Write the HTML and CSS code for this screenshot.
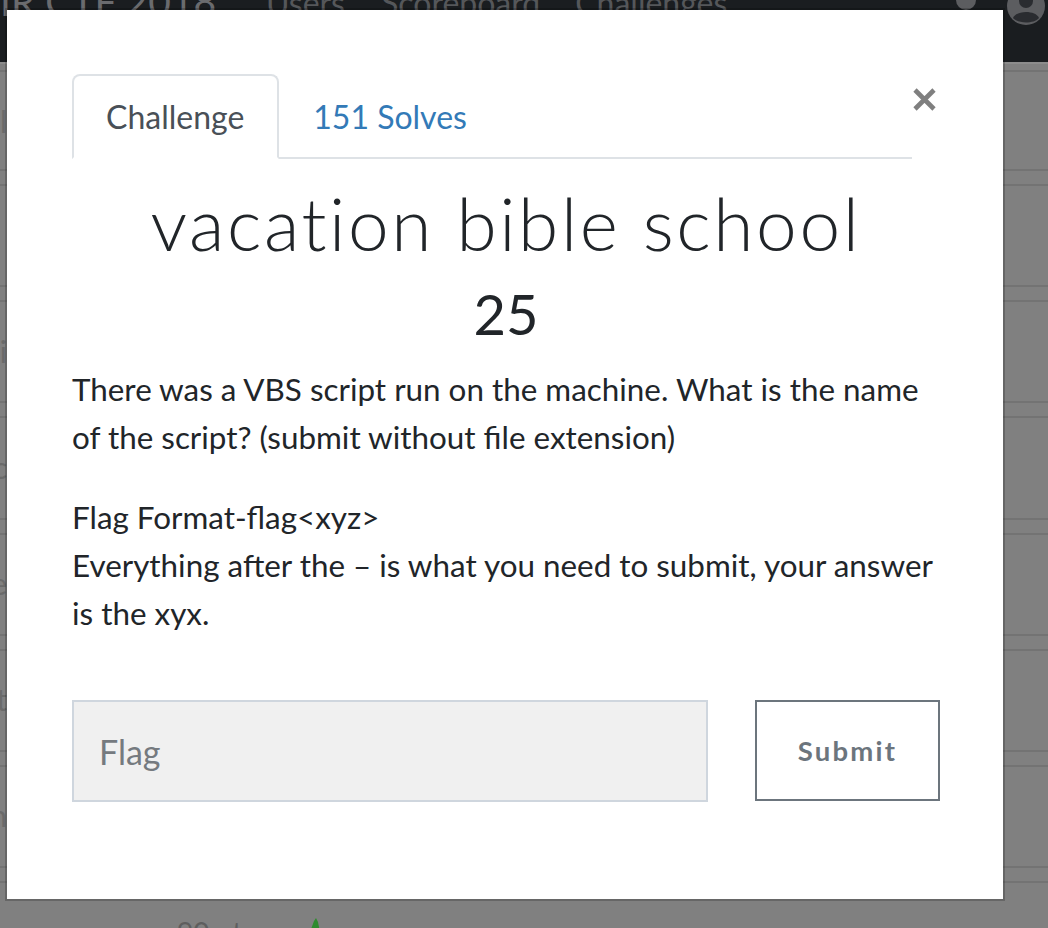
FILE: index.html
```html
<!DOCTYPE html>
<html>
<head>
<meta charset="utf-8">
<link rel="stylesheet" href="styles.css">
</head>
<body>
<div class="page">
  <div class="navbar">
    <span class="brand">IR CTF 2018</span>
    <span class="nav-item">Users</span>
    <span class="nav-item">Scoreboard</span>
    <span class="nav-item">Challenges</span>
    <span class="nav-spacer"></span>
    <span class="nav-dot"></span>
    <svg class="nav-user" width="40" height="40" viewBox="0 0 40 40">
      <circle cx="20" cy="20" r="19" fill="#5c5d60"/>
      <circle cx="20" cy="15" r="7" fill="#2a2c30"/>
      <path d="M7 32 C10 24 30 24 33 32 C28 38 12 38 7 32 Z" fill="#2a2c30"/>
    </svg>
  </div>
  <div class="board">
    <div class="row first"><div class="row-body"><div class="edge">Pl</div></div></div>
    <div class="row"><div class="row-head"></div><div class="row-body"></div></div>
    <div class="row"><div class="row-head"></div><div class="row-body"><div class="edge">Wi</div></div></div>
    <div class="row"><div class="row-head"></div><div class="row-body"><div class="edge">Ac</div></div></div>
    <div class="row"><div class="row-head"></div><div class="row-body"><div class="edge">Re</div></div></div>
    <div class="row"><div class="row-head"></div><div class="row-body"><div class="edge">It</div></div></div>
    <div class="row"><div class="row-head"></div><div class="row-body"><div class="edge">In</div></div></div>
    <div class="row last"><div class="row-head"></div><div class="row-body">
      <span class="pts">90 pts</span>
      <svg class="check" width="10" height="14" viewBox="0 0 10 14"><path d="M0 14 L4 3 L6 0 L8 4 L10 14 Z" fill="#2e8b2e"/></svg>
    </div></div>
  </div>
</div>

<div class="modal">
  <div class="modal-head">
    <div class="tabs">
      <div class="tab active">Challenge</div>
      <div class="tab link">151 Solves</div>
    </div>
    <div class="close">
      <svg width="23" height="23" viewBox="0 0 23 23"><path d="M2 2 L21 21 M21 2 L2 21" stroke="#7f7f7f" stroke-width="4.6" fill="none"/></svg>
    </div>
  </div>
  <h3 class="title">vacation bible school</h3>
  <h4 class="value">25</h4>
  <div class="desc">
    <p>There was a VBS script run on the machine. What is the name of the script? (submit without file extension)</p>
    <p>Flag Format-flag&lt;xyz&gt;<br>Everything after the – is what you need to submit, your answer is the xyx.</p>
  </div>
  <div class="form">
    <input class="flag-input" type="text" placeholder="Flag">
    <button class="submit">Submit</button>
  </div>
</div>
</body>
</html>
```

FILE: styles.css
```css
* { box-sizing: border-box; }
html, body {
  margin: 0;
  padding: 0;
}
body {
  width: 1048px;
  height: 928px;
  overflow: hidden;
  background: #808080;
  font-family: Lato, "Liberation Sans", sans-serif;
  position: relative;
}
.page {
  width: 1048px;
  height: 928px;
  overflow: hidden;
}
.navbar {
  height: 64px;
  background: #1a1d20;
  display: flex;
  align-items: flex-start;
  border-bottom: 2px solid #8c8c8c;
}
.brand {
  margin-top: -22px;
  margin-left: 0;
  font-size: 39px;
  color: #6a6b6e;
  white-space: nowrap;
}
.nav-item {
  margin-top: -17px;
  margin-left: 50px;
  font-size: 32px;
  color: #55575a;
  white-space: nowrap;
}
.nav-item:nth-of-type(3) { margin-left: 36px; }
.nav-item:nth-of-type(4) { margin-left: 35px; }
.nav-spacer { flex: 1; }
.nav-dot {
  width: 20px;
  height: 20px;
  margin-top: -10px;
  border-radius: 50%;
  background: #5c5d60;
  margin-right: 30px;
}
.nav-user {
  margin-top: -14px;
  margin-right: 2px;
}
.board {
  padding-top: 6px;
}
.row {
  height: 116.2px;
  border-top: 2px solid #737373;
}
.row.first {
  height: 99px;
}
.row-head {
  height: 15px;
  border-bottom: 2px solid #737373;
}
.row-body {
  height: 97px;
  display: flex;
  align-items: center;
}
.edge {
  width: 7px;
  overflow: hidden;
  white-space: nowrap;
  display: flex;
  justify-content: flex-end;
  font-size: 30px;
  color: #6a6a6a;
}
.row.last .row-body {
  align-items: flex-start;
  padding-top: 35px;
  padding-left: 177px;
}
.pts {
  font-size: 28px;
  color: #5e5e5e;
  line-height: 28px;
}
.check { margin-left: 56px; margin-top: 0; }

.modal {
  position: absolute;
  left: 5px;
  top: 8px;
  width: 1000px;
  height: 893px;
  background: #fff;
  border: 2px solid rgba(0, 0, 0, 0.2);
  background-clip: padding-box;
  padding: 64px 63px 0 65px;
  color: #212529;
}
.modal-head {
  display: flex;
  align-items: flex-start;
}
.tabs {
  flex: 1;
  display: flex;
  border-bottom: 2px solid #dee2e6;
}
.tab {
  font-size: 32px;
  line-height: 42px;
  padding: 20px 33px 19px 32px;
  border: 2px solid transparent;
  border-top-left-radius: 8px;
  border-top-right-radius: 8px;
  margin-bottom: -2px;
  white-space: nowrap;
}
.tab.active {
  color: #495057;
  border-color: #dee2e6 #dee2e6 #fff;
  background: #fff;
}
.tab.link {
  color: #337ab7;
}
.close {
  width: 28px;
  padding-left: 1px;
  padding-top: 14px;
}
.close svg { display: block; }
.title {
  margin: 0;
  padding-top: 20px;
  text-align: center;
  font-family: Lato, sans-serif;
  font-weight: 300;
  font-size: 73px;
  letter-spacing: 2.6px;
  line-height: 88px;
  color: #212529;
  white-space: nowrap;
}
.value {
  margin: 14px 0 0 0;
  text-align: center;
  font-weight: 400;
  font-size: 56px;
  line-height: 66px;
  color: #212529;
}
.desc {
  padding-top: 18px;
  font-size: 31.4px;
  line-height: 48px;
}
.desc p {
  margin: 0 0 32px 0;
}
.form {
  display: flex;
  align-items: flex-start;
  padding-top: 31px;
}
.flag-input {
  width: 636px;
  height: 102px;
  background: #f0f0f0;
  border: 2px solid #cfd6de;
  padding: 0 25px;
  font-family: Lato, sans-serif;
  font-size: 34px;
  color: #495057;
  outline: none;
}
.flag-input::placeholder {
  color: #757a7f;
}
.submit {
  margin-left: 47px;
  width: 185px;
  height: 101px;
  background: #fff;
  border: 2px solid #6c757d;
  font-family: Lato, sans-serif;
  font-weight: 700;
  font-size: 27.5px;
  letter-spacing: 2.2px;
  color: #6c757d;
  padding: 0;
}
```
